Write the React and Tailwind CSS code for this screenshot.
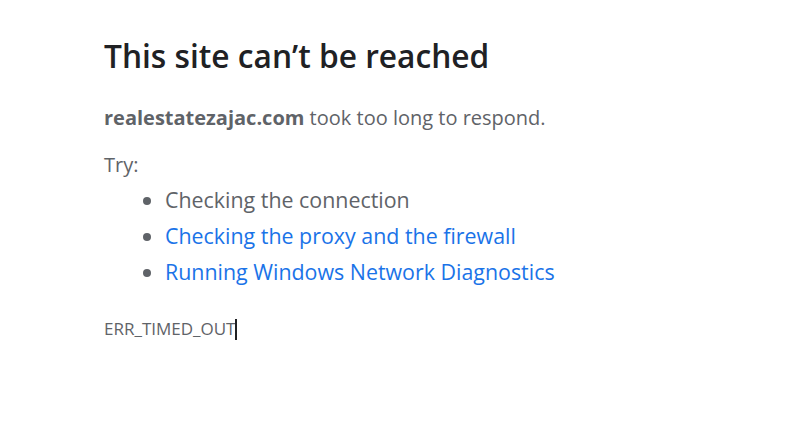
import React from 'react';

const font = { fontFamily: '"Open Sans", "Noto Sans", "Liberation Sans", sans-serif' };

export default function App() {
  return (
    <div className="min-h-[433px] w-[805px] bg-white pl-[104px] pt-[36px]" style={font}>
      {/* heading */}
      <h1 className="text-[31.7px] leading-[40px] font-semibold text-[#202124]">
        This site can’t be reached
      </h1>

      <p className="mt-[28px] text-[20px] leading-[28px] text-[#5f6368]">
        <span className="font-bold">realestatezajac.com</span> took too long to respond.
      </p>

      <div className="mt-[19px] text-[20px] leading-[28px] text-[#5f6368]">Try:</div>

      <ul className="mt-[3px] list-disc pl-[61px] text-[21.4px] leading-[36px] text-[#5f6368] marker:text-[#5f6368]">
        <li>Checking the connection</li>
        <li className="text-[#1a73e8]">Checking the proxy and the firewall</li>
        <li className="text-[#1a73e8]">Running Windows Network Diagnostics</li>
      </ul>

      <div className="mt-[27px] flex items-center text-[17px] leading-[24px] text-[#5f6368]">
        <span>ERR_TIMED_OUT</span>
        <span className="h-[21px] w-[2px] bg-[#202124]" />
      </div>
    </div>
  );
}
